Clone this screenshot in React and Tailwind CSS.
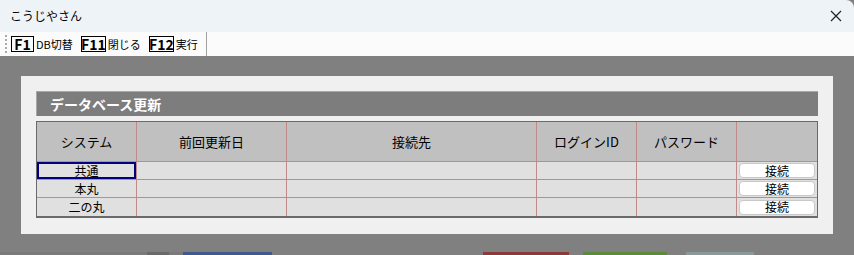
import React from "react";

const cols = [
  { w: "w-[100px]", label: "システム" },
  { w: "w-[150px]", label: "前回更新日" },
  { w: "w-[250px]", label: "接続先" },
  { w: "w-[100px]", label: "ログインID" },
  { w: "w-[100px]", label: "パスワード" },
  { w: "flex-1", label: "" },
];

const rows = ["共通", "本丸", "二の丸"];

function Key({ k, label, wk }) {
  return (
    <div className="flex items-center mr-[8px]">
      <span className={`border border-black h-[16px] ${wk} flex items-center justify-center text-[14px] font-bold leading-none`}>{k}</span>
      <span className="text-[11px] ml-[2px] leading-none">{label}</span>
    </div>
  );
}

export default function App() {
  return (
    <div
      className="w-[854px] h-[255px] relative overflow-hidden bg-[#808080] text-black"
      style={{ fontFamily: '"Noto Sans CJK JP", "Noto Sans", sans-serif' }}
    >
      <div className="h-[32px] bg-[#eef3f7] flex items-center justify-between pl-[10px] pr-[8px] rounded-tr-[8px]">
        <span className="text-[12px] leading-none">こうじやさん</span>
        <svg width="12" height="12" viewBox="0 0 12 12" className="mr-[4px]">
          <path d="M1 1L11 11M11 1L1 11" stroke="#222" strokeWidth="1.2" />
        </svg>
      </div>
      <div className="h-[24px] bg-[#fbfbfb] flex items-center">
        <div className="flex items-center h-full border-r border-[#a0a0a0]">
          <div className="w-[2px] h-[18px] ml-[5px] mr-[4px] border-l-2 border-dotted border-[#aaa]" />
          <Key k="F1" label="DB切替" wk="w-[23px]" />
          <Key k="F11" label="閉じる" wk="w-[25px]" />
          <Key k="F12" label="実行" wk="w-[25px]" />
        </div>
      </div>
      <div className="pt-[20px] pl-[21px]">
        <div className="w-[812px] h-[158px] bg-[#f0f0f0] pt-[15px] pl-[15px]">
          <div className="w-[782px] h-[25px] bg-[#7d7d7d] border-t border-l border-[#a8a8a8] flex items-center pl-[13px]">
            <span className="text-white font-bold text-[14px] leading-none">データベース更新</span>
          </div>
          <div className="w-[782px] mt-[5px] border border-[#6a6a6a] border-b-2">
            <div className="flex h-[40px] bg-[#c0c0c0] border-b border-[#c08a8a]">
              {cols.map((c, i) => (
                <div
                  key={i}
                  className={`${c.w} flex items-center justify-center text-[13px] ${i < 5 ? "border-r border-[#c08a8a]" : ""}`}
                >
                  {c.label}
                </div>
              ))}
            </div>
            {rows.map((r, ri) => (
              <div key={ri} className={`flex h-[18px] bg-[#e0e0e0] ${ri < 2 ? "border-b border-[#c08a8a]" : ""}`}>
                {cols.map((c, i) => (
                  <div
                    key={i}
                    className={`${c.w} flex items-center justify-center text-[12px] leading-none ${i < 5 ? "border-r border-[#c08a8a]" : ""}`}
                  >
                    {i === 0 ? (
                      <div className={`w-full h-full flex items-center justify-center ${ri === 0 ? "border-2 border-[#000080]" : ""}`}>
                        {r}
                      </div>
                    ) : i === 5 ? (
                      <div className="w-[76px] h-[15px] bg-white border border-[#c8c8c8] rounded-[4px] flex items-center justify-center text-[12px]">
                        接続
                      </div>
                    ) : null}
                  </div>
                ))}
              </div>
            ))}
          </div>
        </div>
      </div>
      <div className="absolute left-0 bottom-0 w-full h-[3px] flex">
        <div className="w-[147px] bg-[#7a7a7a]" />
        <div className="w-[22px] bg-[#6a6a6a]" />
        <div className="w-[14px] bg-[#7a7a7a]" />
        <div className="w-[89px] bg-[#3d5a8e]" />
        <div className="w-[211px] bg-[#808080]" />
        <div className="w-[86px] bg-[#8b3a3a]" />
        <div className="w-[14px] bg-[#808080]" />
        <div className="w-[84px] bg-[#5a8a3a]" />
        <div className="w-[19px] bg-[#808080]" />
        <div className="w-[68px] bg-[#8a9a9a]" />
        <div className="flex-1 bg-[#808080]" />
      </div>
    </div>
  );
}
